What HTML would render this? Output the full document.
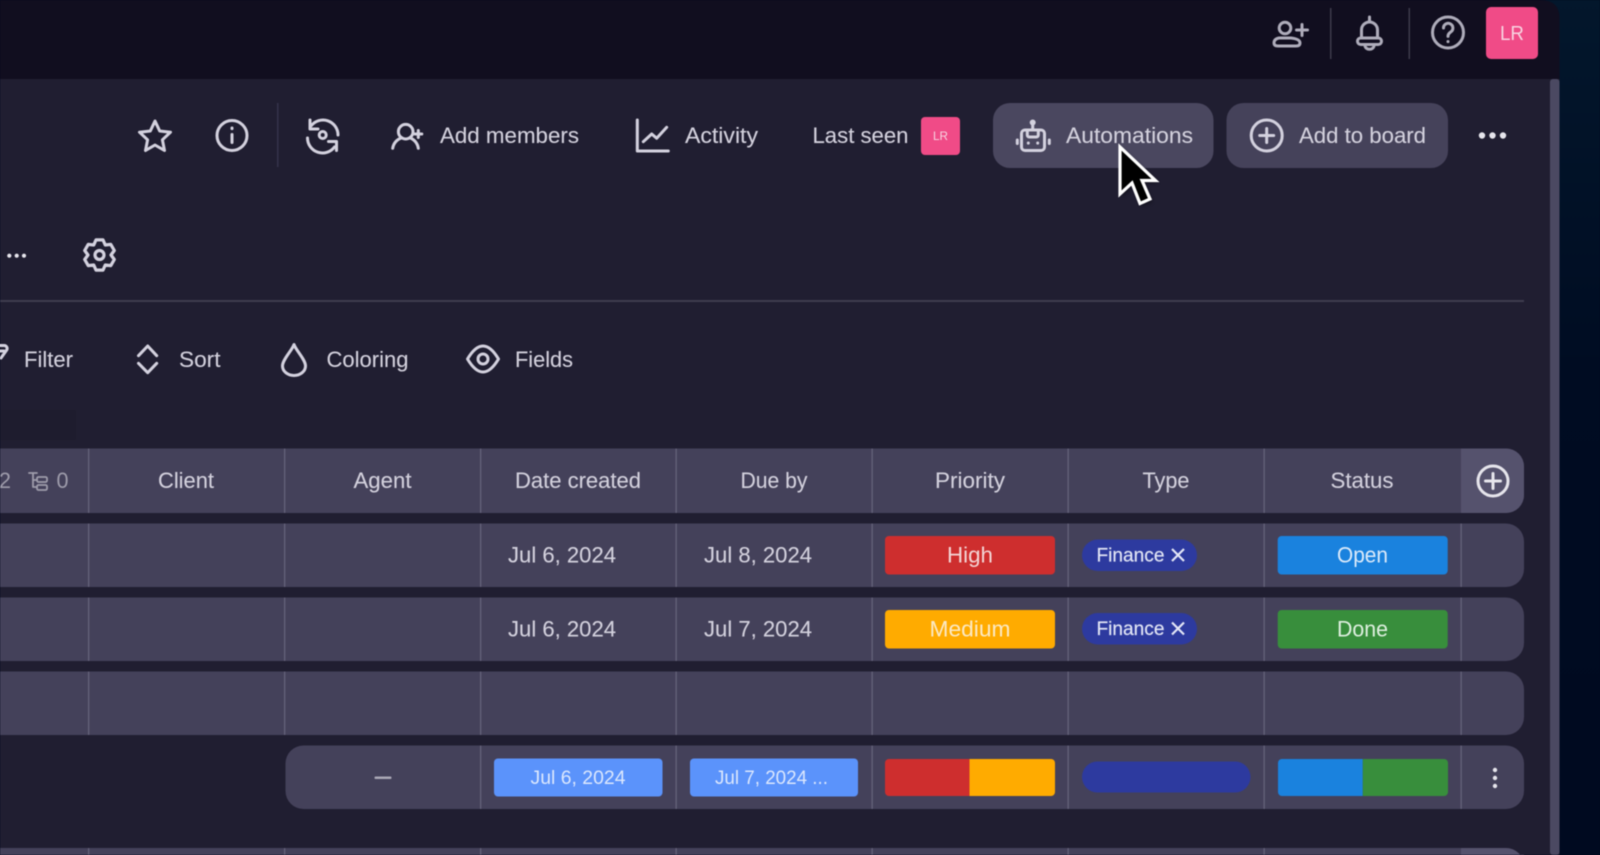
<!DOCTYPE html>
<html>
<head>
<meta charset="utf-8">
<title>Board</title>
<style>
html,body{margin:0;padding:0;width:1600px;height:855px;overflow:hidden;background:#000a20}
svg{display:block;position:absolute;left:0;top:0}
text{font-family:"Liberation Sans",sans-serif;font-size:22px;fill:#d3d1dd;text-anchor:start;stroke:rgba(211,209,221,.3);stroke-width:.35}
.m{text-anchor:middle}
.ic{fill:none;stroke:#d3d1de;stroke-width:3;stroke-linecap:round;stroke-linejoin:round}
.g{stroke:#aeacba}
.soft{filter:blur(.45px)}
</style>
</head>
<body>
<svg width="1600" height="855" viewBox="0 0 1600 855" xmlns="http://www.w3.org/2000/svg">
<defs>
<linearGradient id="outer" x1="0" y1="0" x2="0" y2="1"><stop offset="0" stop-color="#03172c"/><stop offset=".45" stop-color="#000c22"/><stop offset="1" stop-color="#000a20"/></linearGradient>
<filter id="sh" x="-30%" y="-30%" width="160%" height="160%"><feGaussianBlur stdDeviation="2"/></filter>
</defs>
<g class="soft">
<rect width="1600" height="855" fill="url(#outer)"/>
<path d="M0 0H1540Q1559.5 0 1559.5 18V855H0Z" fill="#110e1f"/>
<rect x="0" y="79" width="1559.5" height="776" fill="#201e31"/>
<rect x="1550" y="79" width="9.5" height="776" rx="3" fill="#4b4962"/>
<rect x="0" y="300" width="1524" height="2" fill="#3e3c4f"/>
<rect x="0" y="410" width="76" height="30" fill="#1e1c2e"/>

<!-- top bar -->
<g class="ic g">
<circle cx="1285" cy="28" r="5.8"/>
<path d="M1279 38h12q9 1 9 5q0 3-4 3h-18q-4 0-4-3q0-4 5-5z"/>
<path d="M1302 24.500v11M1296.500 30h11"/>
<path d="M1369.500 17v4M1361.500 38V30a8 8 0 0 1 16 0V38"/>
<rect x="1357.500" y="38" width="24" height="6.500" rx="3.200"/>
<path d="M1365 45.500a4.500 3.800 0 0 0 9 0"/>
<circle cx="1448" cy="32.500" r="15.500"/>
<path d="M1443.500 28a4.700 4.700 0 1 1 7.200 4q-2.700 1.800-2.700 4.400"/>
<path d="M1448 41.500v.1"/>
</g>
<rect x="1330" y="8" width="1.500" height="51" fill="#3c3a4a"/>
<rect x="1408.500" y="8" width="1.500" height="51" fill="#3c3a4a"/>
<rect x="1486" y="7" width="52" height="52" rx="5" fill="#f04b87"/>
<text x="1512" y="40" class="m" style="font-size:20px;fill:#f7d3e0;stroke:none" textLength="24" lengthAdjust="spacingAndGlyphs">LR</text>

<!-- toolbar 1 -->
<g class="ic">
<path d="M155 121L159.700 131 170.500 132.200 162.400 139.800 164.500 150.500 155 145 145.500 150.500 147.600 139.800 139.500 132.200 150.300 131Z"/>
<circle cx="232" cy="135.500" r="15"/>
<path d="M232 134.500v8M232 128v.6"/>
<path d="M311 126A15 15 0 0 1 338 135M307.500 138A15 15 0 0 0 334.500 147"/>
<path d="M310 120v9h8M336.500 150.500v-9h-8"/>
<circle cx="322.700" cy="135" r="3.500"/>
<circle cx="405.700" cy="131.700" r="7.300"/>
<path d="M392.700 148.300a13 13 0 0 1 9-10.500M410 137.800a13 13 0 0 1 8.300 10.500"/>
<path d="M418.300 130.500v7M414.800 134h7"/>
<path d="M637.300 120v31h31"/>
<path d="M643.300 141.700l8.400-7.700 5 4.300 10-11"/>
</g>
<rect x="277" y="103" width="1.500" height="64" fill="#34324a"/>
<text x="440" y="143" textLength="139" lengthAdjust="spacingAndGlyphs">Add members</text>
<text x="685" y="143" textLength="73" lengthAdjust="spacingAndGlyphs">Activity</text>
<text x="812.500" y="143" textLength="96" lengthAdjust="spacingAndGlyphs">Last seen</text>
<rect x="921" y="117" width="39" height="38" rx="4" fill="#f04b87"/>
<text x="940.500" y="140" class="m" style="font-size:12px;fill:#f7d3e0;stroke:none" textLength="15" lengthAdjust="spacingAndGlyphs">LR</text>

<rect x="993" y="103" width="220.500" height="65" rx="17" fill="#4a475f"/>
<rect x="1226.500" y="103" width="221.500" height="65" rx="17" fill="#45425a"/>
<g class="ic">
<rect x="1021.500" y="130" width="23" height="20.500" rx="3.500"/>
<path d="M1032.700 124v6M1027.300 130v5a2 2 0 0 0 2 2h7a2 2 0 0 0 2-2v-5"/>
<circle cx="1032.700" cy="122.500" r="1.500"/>
<path d="M1017.300 140v3.500M1049.300 140v3.500M1028.300 143v.1M1037.700 143v.1"/>
<circle cx="1266.700" cy="135.500" r="15.500"/>
<path d="M1266.700 128.500v14M1259.700 135.500h14"/>
</g>
<text x="1066" y="143" textLength="127" lengthAdjust="spacingAndGlyphs">Automations</text>
<text x="1299" y="143" textLength="127" lengthAdjust="spacingAndGlyphs">Add to board</text>
<g fill="#e6e5ec"><circle cx="1482" cy="135.500" r="3.200"/><circle cx="1492.500" cy="135.500" r="3.200"/><circle cx="1503" cy="135.500" r="3.200"/>
<circle cx="9.300" cy="255.700" r="2.100"/><circle cx="16.700" cy="255.700" r="2.100"/><circle cx="24" cy="255.700" r="2.100"/></g>

<!-- gear -->
<g class="ic" style="stroke-width:3.200">
<path transform="translate(99.500 255)" d="M-3.500-15.100L3.500-15.100 5.750-10 11.300-10.600 14.800-4.500 11.500 0 14.800 4.500 11.300 10.600 5.750 10 3.500 15.100-3.500 15.100-5.750 10-11.300 10.600-14.800 4.500-11.500 0-14.800-4.500-11.300-10.600-5.750-10Z"/>
<circle cx="99.500" cy="255" r="4.500"/>
</g>

<!-- toolbar 2 -->
<g class="ic">
<path d="M-2 345.500h6a3 3 0 0 1 2.500 4.800L1 358M-2 351h6"/>
<path d="M138.500 355.700l9.200-9.700 9 9.700M138.500 363.300l9.200 9.400 9-9.400"/>
<path d="M294 344.500c-2 6-11.500 15-11.500 21.500a11.500 9.500 0 0 0 23 0c0-6.500-9.500-15.500-11.500-21.500z"/>
<path d="M467.500 359Q483 333 498.500 359Q483 385 467.500 359z"/>
<circle cx="483" cy="359" r="5"/>
</g>
<text x="24" y="367" textLength="49" lengthAdjust="spacingAndGlyphs">Filter</text>
<text x="179" y="367" textLength="41.500" lengthAdjust="spacingAndGlyphs">Sort</text>
<text x="326.500" y="367" textLength="82" lengthAdjust="spacingAndGlyphs">Coloring</text>
<text x="515" y="367" textLength="58" lengthAdjust="spacingAndGlyphs">Fields</text>

<!-- rows -->
<path d="M0 448.500H1506a18 18 0 0 1 18 18V495a18 18 0 0 1-18 18H0Z" fill="#44415a"/>
<path d="M1461 448.500H1506a18 18 0 0 1 18 18V495a18 18 0 0 1-18 18H1461Z" fill="#55526d"/>
<path d="M0 523.500H1506a18 18 0 0 1 18 18V569a18 18 0 0 1-18 18H0Z" fill="#44415a"/>
<path d="M0 597.500H1506a18 18 0 0 1 18 18V643a18 18 0 0 1-18 18H0Z" fill="#44415a"/>
<path d="M0 671.500H1506a18 18 0 0 1 18 18V717a18 18 0 0 1-18 18H0Z" fill="#44415a"/>
<path d="M303.500 745.500H1506a18 18 0 0 1 18 18V791a18 18 0 0 1-18 18H303.500a18 18 0 0 1-18-18V763.500a18 18 0 0 1 18-18Z" fill="#44415a"/>
<path d="M0 848H1506a18 18 0 0 1 18 18V855H0Z" fill="#44415a"/>
<path d="M1461 848H1506a18 18 0 0 1 18 18V855H1461Z" fill="#55526d"/>

<!-- dividers -->
<g fill="#646279">
<rect x="88" y="448.500" width="1.300" height="64.500"/><rect x="88" y="523.500" width="1.300" height="63.500"/><rect x="88" y="597.500" width="1.300" height="63.500"/><rect x="88" y="671.500" width="1.300" height="63.500"/><rect x="88" y="848" width="1.300" height="7"/>
<rect x="284" y="448.500" width="1.300" height="64.500"/><rect x="284" y="523.500" width="1.300" height="63.500"/><rect x="284" y="597.500" width="1.300" height="63.500"/><rect x="284" y="671.500" width="1.300" height="63.500"/><rect x="284" y="848" width="1.300" height="7"/>
<rect x="480" y="448.500" width="1.300" height="64.500"/><rect x="480" y="523.500" width="1.300" height="63.500"/><rect x="480" y="597.500" width="1.300" height="63.500"/><rect x="480" y="671.500" width="1.300" height="63.500"/><rect x="480" y="745.500" width="1.300" height="63.500"/><rect x="480" y="848" width="1.300" height="7"/>
<rect x="675.500" y="448.500" width="1.300" height="64.500"/><rect x="675.500" y="523.500" width="1.300" height="63.500"/><rect x="675.500" y="597.500" width="1.300" height="63.500"/><rect x="675.500" y="671.500" width="1.300" height="63.500"/><rect x="675.500" y="745.500" width="1.300" height="63.500"/><rect x="675.500" y="848" width="1.300" height="7"/>
<rect x="871.500" y="448.500" width="1.300" height="64.500"/><rect x="871.500" y="523.500" width="1.300" height="63.500"/><rect x="871.500" y="597.500" width="1.300" height="63.500"/><rect x="871.500" y="671.500" width="1.300" height="63.500"/><rect x="871.500" y="745.500" width="1.300" height="63.500"/><rect x="871.500" y="848" width="1.300" height="7"/>
<rect x="1067.500" y="448.500" width="1.300" height="64.500"/><rect x="1067.500" y="523.500" width="1.300" height="63.500"/><rect x="1067.500" y="597.500" width="1.300" height="63.500"/><rect x="1067.500" y="671.500" width="1.300" height="63.500"/><rect x="1067.500" y="745.500" width="1.300" height="63.500"/><rect x="1067.500" y="848" width="1.300" height="7"/>
<rect x="1263.500" y="448.500" width="1.300" height="64.500"/><rect x="1263.500" y="523.500" width="1.300" height="63.500"/><rect x="1263.500" y="597.500" width="1.300" height="63.500"/><rect x="1263.500" y="671.500" width="1.300" height="63.500"/><rect x="1263.500" y="745.500" width="1.300" height="63.500"/><rect x="1263.500" y="848" width="1.300" height="7"/>
<rect x="1460.500" y="523.500" width="1.300" height="63.500"/><rect x="1460.500" y="597.500" width="1.300" height="63.500"/><rect x="1460.500" y="671.500" width="1.300" height="63.500"/><rect x="1460.500" y="745.500" width="1.300" height="63.500"/>
</g>

<!-- header -->
<text x="5" y="488" class="m" style="fill:#9e9cab;stroke:none" textLength="12" lengthAdjust="spacingAndGlyphs">2</text>
<g class="ic g" style="stroke-width:1.800;stroke:#9e9cab">
<path d="M29 473h8M33 473v14h4M33 480h4"/>
<rect x="37" y="477" width="10" height="5" rx="1.500"/>
<rect x="37" y="485" width="10" height="5" rx="1.500"/>
</g>
<text x="62.500" y="488" class="m" style="fill:#9e9cab;stroke:none" textLength="12" lengthAdjust="spacingAndGlyphs">0</text>
<text x="186" y="488" class="m" textLength="56" lengthAdjust="spacingAndGlyphs">Client</text>
<text x="382.500" y="488" class="m" textLength="58" lengthAdjust="spacingAndGlyphs">Agent</text>
<text x="578" y="488" class="m" textLength="126" lengthAdjust="spacingAndGlyphs">Date created</text>
<text x="774" y="488" class="m" textLength="67" lengthAdjust="spacingAndGlyphs">Due by</text>
<text x="970" y="488" class="m" textLength="70" lengthAdjust="spacingAndGlyphs">Priority</text>
<text x="1166" y="488" class="m" textLength="47" lengthAdjust="spacingAndGlyphs">Type</text>
<text x="1362" y="488" class="m" textLength="63" lengthAdjust="spacingAndGlyphs">Status</text>
<g class="ic" style="stroke:#e6e5ec">
<circle cx="1493" cy="481" r="15"/>
<path d="M1493 473.500v15M1485.500 481h15"/>
</g>

<!-- row 1 -->
<text x="562" y="562.500" class="m" textLength="108" lengthAdjust="spacingAndGlyphs">Jul 6, 2024</text>
<text x="758" y="562.500" class="m" textLength="108" lengthAdjust="spacingAndGlyphs">Jul 8, 2024</text>
<rect x="885" y="536" width="170" height="38.500" rx="4" fill="#ce2e2e"/>
<text x="970" y="562.500" class="m" style="fill:#f3d5d5;stroke:none" textLength="46" lengthAdjust="spacingAndGlyphs">High</text>
<rect x="1082" y="539.500" width="115" height="31.500" rx="15.700" fill="#2d3a9f"/>
<text x="1096.500" y="561.500" style="font-size:19.500px;fill:#e3e6f6;stroke:rgba(227,230,246,.45);stroke-width:.45" textLength="68" lengthAdjust="spacingAndGlyphs">Finance</text>
<path d="M1172 549l12 12M1184 549l-12 12" stroke="#e3e6f6" stroke-width="2.200" fill="none"/>
<rect x="1277.700" y="536" width="170" height="38.500" rx="4" fill="#1a82de"/>
<text x="1362.500" y="562.500" class="m" style="fill:#dbeafa;stroke:none" textLength="51" lengthAdjust="spacingAndGlyphs">Open</text>

<!-- row 2 -->
<text x="562" y="636.500" class="m" textLength="108" lengthAdjust="spacingAndGlyphs">Jul 6, 2024</text>
<text x="758" y="636.500" class="m" textLength="108" lengthAdjust="spacingAndGlyphs">Jul 7, 2024</text>
<rect x="885" y="610" width="170" height="38.500" rx="4" fill="#ffab00"/>
<text x="970" y="636.500" class="m" style="fill:#fbe9c4;stroke:none" textLength="81" lengthAdjust="spacingAndGlyphs">Medium</text>
<rect x="1082" y="613" width="115" height="31.500" rx="15.700" fill="#2d3a9f"/>
<text x="1096.500" y="635" style="font-size:19.500px;fill:#e3e6f6;stroke:rgba(227,230,246,.45);stroke-width:.45" textLength="68" lengthAdjust="spacingAndGlyphs">Finance</text>
<path d="M1172 622.500l12 12M1184 622.500l-12 12" stroke="#e3e6f6" stroke-width="2.200" fill="none"/>
<rect x="1277.700" y="610" width="170" height="38.500" rx="4" fill="#388e3c"/>
<text x="1362.500" y="636.500" class="m" style="fill:#dff0e0;stroke:none" textLength="51" lengthAdjust="spacingAndGlyphs">Done</text>

<!-- row 4 -->
<rect x="374.500" y="776.500" width="17" height="2.500" rx="1" fill="#aaa8b6"/>
<rect x="494" y="758.500" width="168.500" height="38" rx="4" fill="#5b93fb"/>
<text x="578" y="784" class="m" style="font-size:19.500px;fill:#dbe7fd;stroke:none" textLength="95" lengthAdjust="spacingAndGlyphs">Jul 6, 2024</text>
<rect x="690" y="758.500" width="168" height="38" rx="4" fill="#5b93fb"/>
<text x="771.500" y="784" class="m" style="font-size:19.500px;fill:#dbe7fd;stroke:none" textLength="113" lengthAdjust="spacingAndGlyphs">Jul 7, 2024 ...</text>
<path d="M889 759h80.500v37H889a4 4 0 0 1-4-4V763a4 4 0 0 1 4-4Z" fill="#ce2e2e"/>
<path d="M969.500 759H1051a4 4 0 0 1 4 4V792a4 4 0 0 1-4 4H969.500Z" fill="#ffab00"/>
<rect x="1082" y="761.500" width="168.500" height="31" rx="15.500" fill="#2d3a9f"/>
<path d="M1282 759h80.800v37H1282a4 4 0 0 1-4-4V763a4 4 0 0 1 4-4Z" fill="#1a82de"/>
<path d="M1362.800 759H1444a4 4 0 0 1 4 4V792a4 4 0 0 1-4 4H1362.800Z" fill="#388e3c"/>
<g fill="#e6e5ec"><circle cx="1495" cy="770" r="2.200"/><circle cx="1495" cy="778" r="2.200"/><circle cx="1495" cy="786" r="2.200"/></g>
</g>

<!-- cursor -->
<path d="M1122 149L1122 197 1134 186 1142 206 1152 202 1144 183 1158 183Z" fill="#000" opacity=".4" filter="url(#sh)"/>
<path d="M1120 147L1120 194 1132 183 1140 203.500 1150 199 1142 180.500 1155.500 180.500Z" fill="#000" stroke="#fff" stroke-width="3.200" stroke-linejoin="miter" style="filter:blur(.4px)"/>
</svg>
</body>
</html>
